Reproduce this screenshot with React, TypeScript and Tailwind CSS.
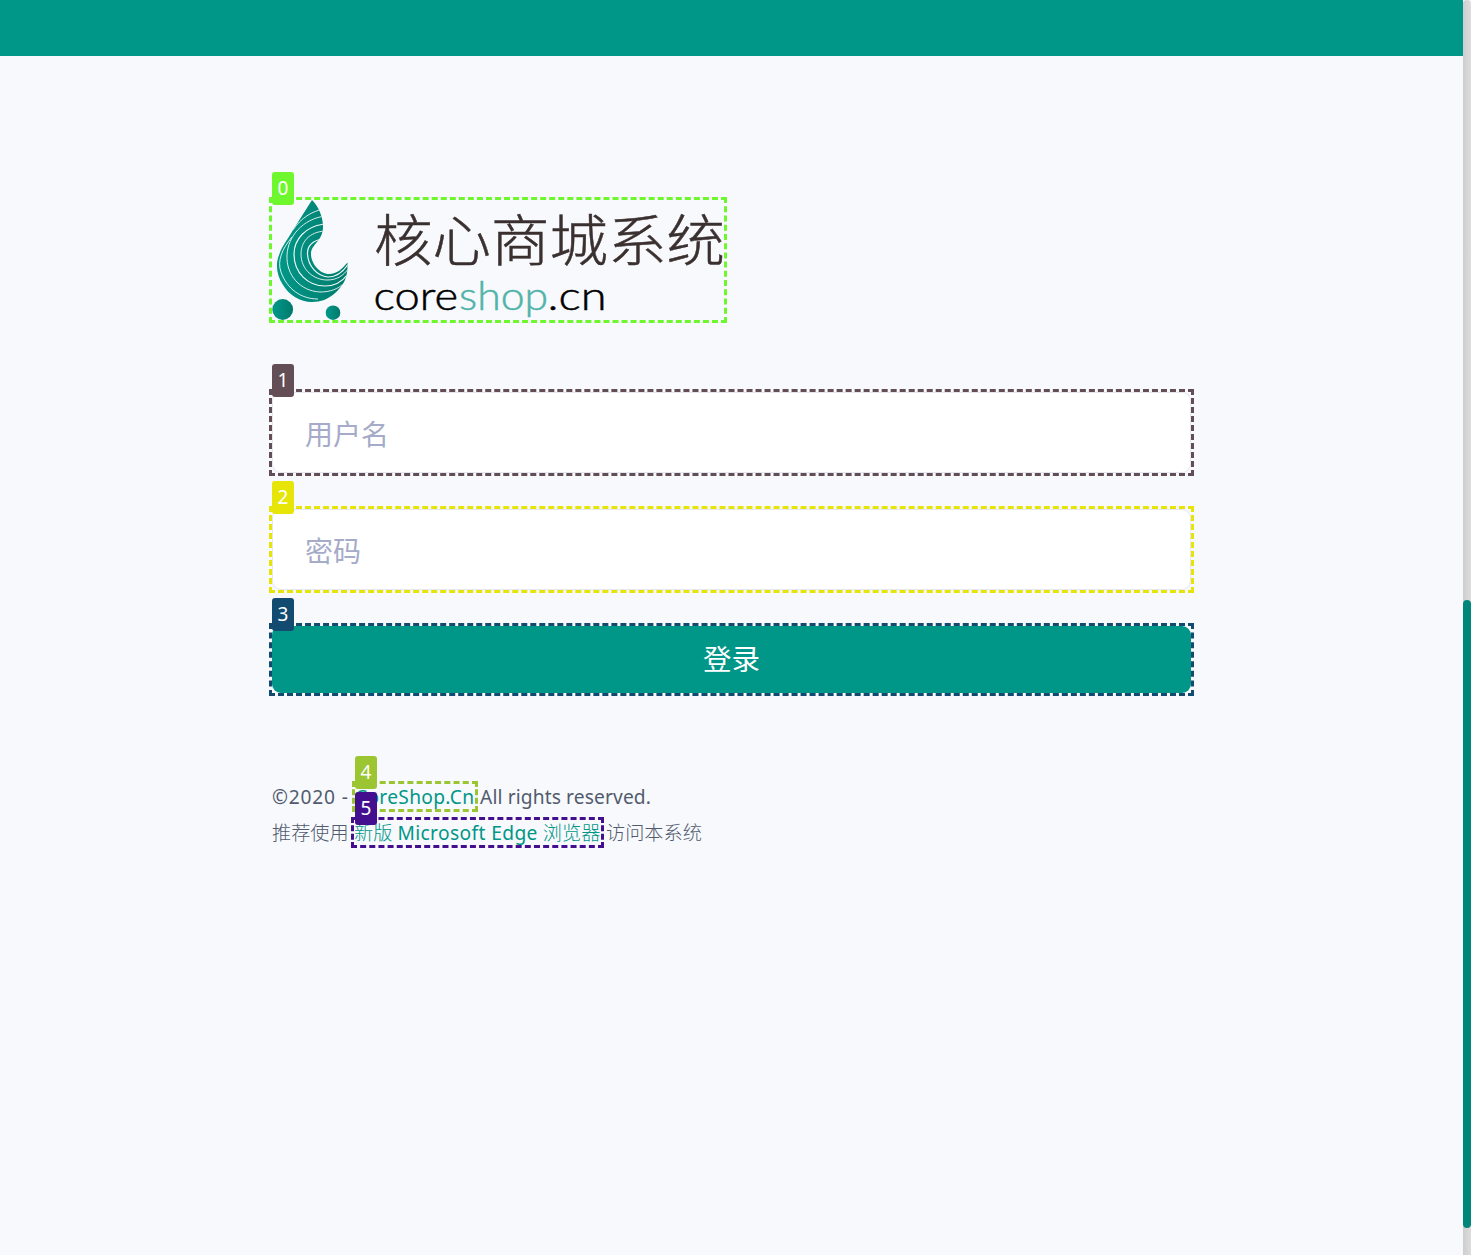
import React from 'react';

function Marker({ label, color, inset = 'left-0' }: { label: string; color: string; inset?: string }) {
  return (
    <>
      <span className="pointer-events-none absolute -inset-[3px] border-[3px] border-dashed" style={{ borderColor: color }} />
      <span
        className={`absolute -top-7 z-10 flex h-[33px] w-[22px] items-center justify-center rounded-[3px] font-['Noto_Sans',sans-serif] text-[19px] font-normal leading-none tracking-normal text-white ${inset}`}
        style={{ backgroundColor: color }}
      >
        {label}
      </span>
    </>
  );
}

function Logo() {
  return (
    <svg viewBox="0 0 452 120" className="block h-[120px] w-[452px] overflow-visible">
      <defs>
        <linearGradient id="leaf" x1="0" y1="0" x2="1" y2="0">
          <stop offset="0" stopColor="#009a8a" />
          <stop offset="1" stopColor="#00796b" />
        </linearGradient>
        <clipPath id="leafClip">
          <path d="M40 0C47 7 51 17 51 27C51 41 39 44 39 54C39 64 48 74 57 74C65 74 70 69 75.500 62.500C76 78 72 85 62 94C56 99 49 102 40 102C28 102 17 95 11 85C5 76 3 65 7 55C10 46 16 39 21 30Z" />
        </clipPath>
      </defs>
      <g clipPath="url(#leafClip)">
        <rect width="80" height="105" fill="url(#leaf)" />
        <g fill="none" stroke="#eef8f6" strokeWidth="0.900">
          <path d="M52 9C40 11 29 18 21 30" />
          <path d="M20 37C10 49 5 61 9 72C15 89 29 99 46 99" />
          <path d="M53 16C31 19 16 36 15 55C14 75 28 91 48 92C58 92 66 89 71 84" />
          <path d="M53 24C33 26 22 40 22 54C22 73 36 86 53 86C63 86 70 82 76 74" strokeWidth="1.200" />
          <path d="M53 31C37 32 29 42 29 54C29 70 42 80 55 80C65 80 71 76 77 68" />
          <path d="M51 39C41 40 35 46 35.500 54C36 66 45 76 56 77C66 77 72 71 77 63" strokeWidth="1.200" />
        </g>
      </g>
      <circle cx="10.700" cy="109.500" r="10.400" fill="url(#leaf)" />
      <circle cx="61" cy="112.700" r="7.300" fill="url(#leaf)" />
      <text
        transform="translate(102 61) scale(1 0.940)"
        fontSize="59"
        fontWeight="300"
        textLength="351"
        lengthAdjust="spacingAndGlyphs"
        fill="#3a302f"
        stroke="#3a302f"
        strokeWidth="0.500"
        className="font-['Noto_Sans_CJK_SC',sans-serif]"
      >
        核心商城系统
      </text>
      <g fontSize="39" fontWeight="300" strokeWidth="0.500" className="font-['Lato',sans-serif]">
        <text x="101.500" y="109.500" textLength="84.500" lengthAdjust="spacingAndGlyphs" fill="#000" stroke="#000">core</text>
        <text x="187" y="109.500" textLength="89" lengthAdjust="spacingAndGlyphs" fill="#52b3aa" stroke="#52b3aa">shop</text>
        <text x="275.500" y="109.500" textLength="59" lengthAdjust="spacingAndGlyphs" fill="#000" stroke="#000">.cn</text>
      </g>
    </svg>
  );
}

function Field({ type, placeholder, label, color }: { type: string; placeholder: string; label: string; color: string }) {
  return (
    <div className="relative h-[81px]">
      <input
        type={type}
        placeholder={placeholder}
        className="block h-full w-full rounded-[9px] border border-[#e4e7f0] bg-white pl-8 pt-[3px] text-[28px] outline-none placeholder:text-[#a5abc8]"
      />
      <Marker label={label} color={color} />
    </div>
  );
}

export default function App() {
  return (
    <div className="flex h-[1255px] w-full overflow-hidden bg-[#f7f9fc] font-['Noto_Sans','Noto_Sans_CJK_SC',sans-serif]">
      <div className="flex-1">
        <header className="h-14 bg-[#009688]" />
        <main className="ml-[272px] w-[919px] pt-36">
          <div className="relative h-[120px] w-[452px]">
            <Logo />
            <Marker label="0" color="#6ef72d" />
          </div>
          <form className="mt-[72px] flex flex-col gap-9" onSubmit={(e) => e.preventDefault()}>
            <Field type="text" placeholder="用户名" label="1" color="#644e56" />
            <Field type="password" placeholder="密码" label="2" color="#e6e507" />
            <div className="relative h-[67px]">
              <button className="h-full w-full rounded-[9px] bg-[#009688] text-[28.500px] text-white">登录</button>
              <Marker label="3" color="#134a70" />
            </div>
          </form>
          <footer className="mt-[86px] text-[19.200px] leading-9 text-[#525b6e]">
            <div className="flex h-9 items-start whitespace-nowrap">
              <span className="w-[83px] tracking-[0.800px]">©2020 -</span>
              <a className="relative mt-[5px] h-[25px] w-[120px] leading-[25px] tracking-[0.300px] text-[#009688]">
                CoreShop.Cn
                <Marker label="4" color="#9bc531" />
              </a>
              <span className="ml-[5px] tracking-[0.120px]">All rights reserved.</span>
            </div>
            <div className="flex h-9 items-start whitespace-nowrap font-light">
              <span className="w-[82px]">推荐使用</span>
              <a className="relative mt-[5px] h-[25px] w-[247px] leading-[25px] text-[#009688]">
                新版 <span className="font-normal tracking-[0.380px]">Microsoft Edge</span> 浏览器
                <Marker label="5" color="#430f8e" inset="left-px" />
              </a>
              <span className="ml-[5px]">访问本系统</span>
            </div>
          </footer>
        </main>
      </div>
      <aside className="flex w-2 flex-col rounded-t bg-linear-to-r from-[#cecece] to-[#dddddd] pt-[600px]">
        <div className="h-[628px] rounded bg-[#008779]" />
      </aside>
    </div>
  );
}
